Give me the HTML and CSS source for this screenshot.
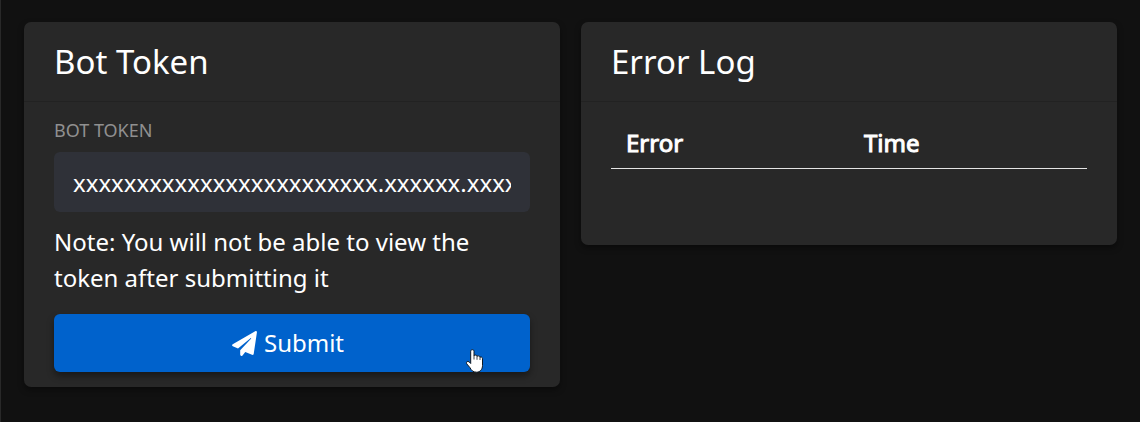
FILE: index.html
```html
<!DOCTYPE html>
<html lang="en">
<head>
<meta charset="utf-8">
<title>Bot Token</title>
<link rel="stylesheet" href="styles.css">
</head>
<body>
<main class="page">
  <section class="card">
    <h2 class="card-header">Bot Token</h2>
    <form class="card-body">
      <label class="label" for="token">BOT TOKEN</label>
      <input class="input" id="token" type="text" value="xxxxxxxxxxxxxxxxxxxxxxxx.xxxxxx.xxxxxxxxxxxxxxxxxxxxxxxxxxx">
      <p class="note">Note: You will not be able to view the token after submitting it</p>
      <button class="submit" type="button">
        <svg class="plane" viewBox="0 0 25 25" aria-hidden="true"><path fill="currentColor" d="M23.200.2.700 13.200C-.2 13.800-.1 14.900.800 15.300L6 17.500 18.500 7.200C18.900 6.900 19.300 7.300 19 7.700L8.200 19.300V23.600C8.200 24.900 9.700 25.400 10.500 24.400L13.300 21.100 20 23.800C20.800 24.100 21.500 23.700 21.700 22.900L24.900 1.500C25.100.300 24.100-.300 23.200.200Z"/></svg>
        <span>Submit</span>
      </button>
    </form>
  </section>
  <section class="card">
    <h2 class="card-header">Error Log</h2>
    <div class="card-body log-body">
      <div class="log-head">
        <span>Error</span>
        <span>Time</span>
      </div>
    </div>
  </section>
</main>
<svg class="cursor" viewBox="0 0 17 24" aria-hidden="true"><path fill="#fff" stroke="#101820" stroke-width="1" stroke-linejoin="round" d="M4.700 2.200C4.700.2 8 .2 8 2.200V6.500C9 5.700 11 6 11 7.200 12 6.500 14 6.900 14 8.200 15 7.600 16.500 8.200 16.500 9.700V16.500C16.500 20.500 14 23.200 10.500 23.200 7 23.200 5.300 21.200 4 18.700L.7 14.800C-.3 13.100 1.600 11.800 3 12.800L4.700 14.500Z"/><path fill="none" stroke="#101820" stroke-width=".8" d="M8 6V10.500M11 7V10.800M14 8V11"/></svg>
</body>
</html>
```

FILE: styles.css
```css
* {
  box-sizing: border-box;
}

body {
  margin: 0;
  min-height: 422px;
  background: #111;
  border-left: 1px solid #292929;
  color: #fff;
  font: 24px/36px "Noto Sans", sans-serif;
  overflow: hidden;
}

.page {
  display: grid;
  grid-template-columns: 536px 536px;
  column-gap: 21px;
  align-items: start;
  padding: 22px 23px;
}

.card {
  background: #282828;
  border-radius: 7px;
  box-shadow: 0 3px 6px rgba(0, 0, 0, .4);
}

.card-header {
  height: 80px;
  margin: 0;
  padding: 0 30px;
  border-bottom: 1px solid #222;
  font-size: 33px;
  font-weight: 400;
  line-height: 79px;
}

.card-body {
  display: flex;
  flex-direction: column;
  padding: 15px 30px;
}

.label {
  height: 35px;
  color: #909090;
  font-size: 18px;
  line-height: 27px;
}

.input {
  width: 100%;
  height: 60px;
  padding: 0 19px;
  border: 0;
  border-radius: 6px;
  background: #2f3138;
  color: #fff;
  font: inherit;
}

.note {
  margin: 12px 0 18px;
}

.submit {
  display: flex;
  align-items: center;
  justify-content: center;
  gap: 7px;
  height: 58px;
  padding: 0 8px 0 0;
  border: 0;
  border-radius: 6px;
  background: #0062cc;
  box-shadow: 0 4px 7px rgba(0, 0, 0, .4);
  color: #fff;
  font: inherit;
}

.plane {
  width: 25px;
  height: 25px;
}

.log-body {
  height: 143px;
}

.log-head {
  display: grid;
  grid-template-columns: 238px 1fr;
  height: 52px;
  padding: 8px 15px 0;
  border-bottom: 1px solid #e4e4e4;
  -webkit-text-stroke: 1px #fff;
}

.cursor {
  position: absolute;
  left: 466px;
  top: 349px;
  width: 17px;
  height: 24px;
}
```
